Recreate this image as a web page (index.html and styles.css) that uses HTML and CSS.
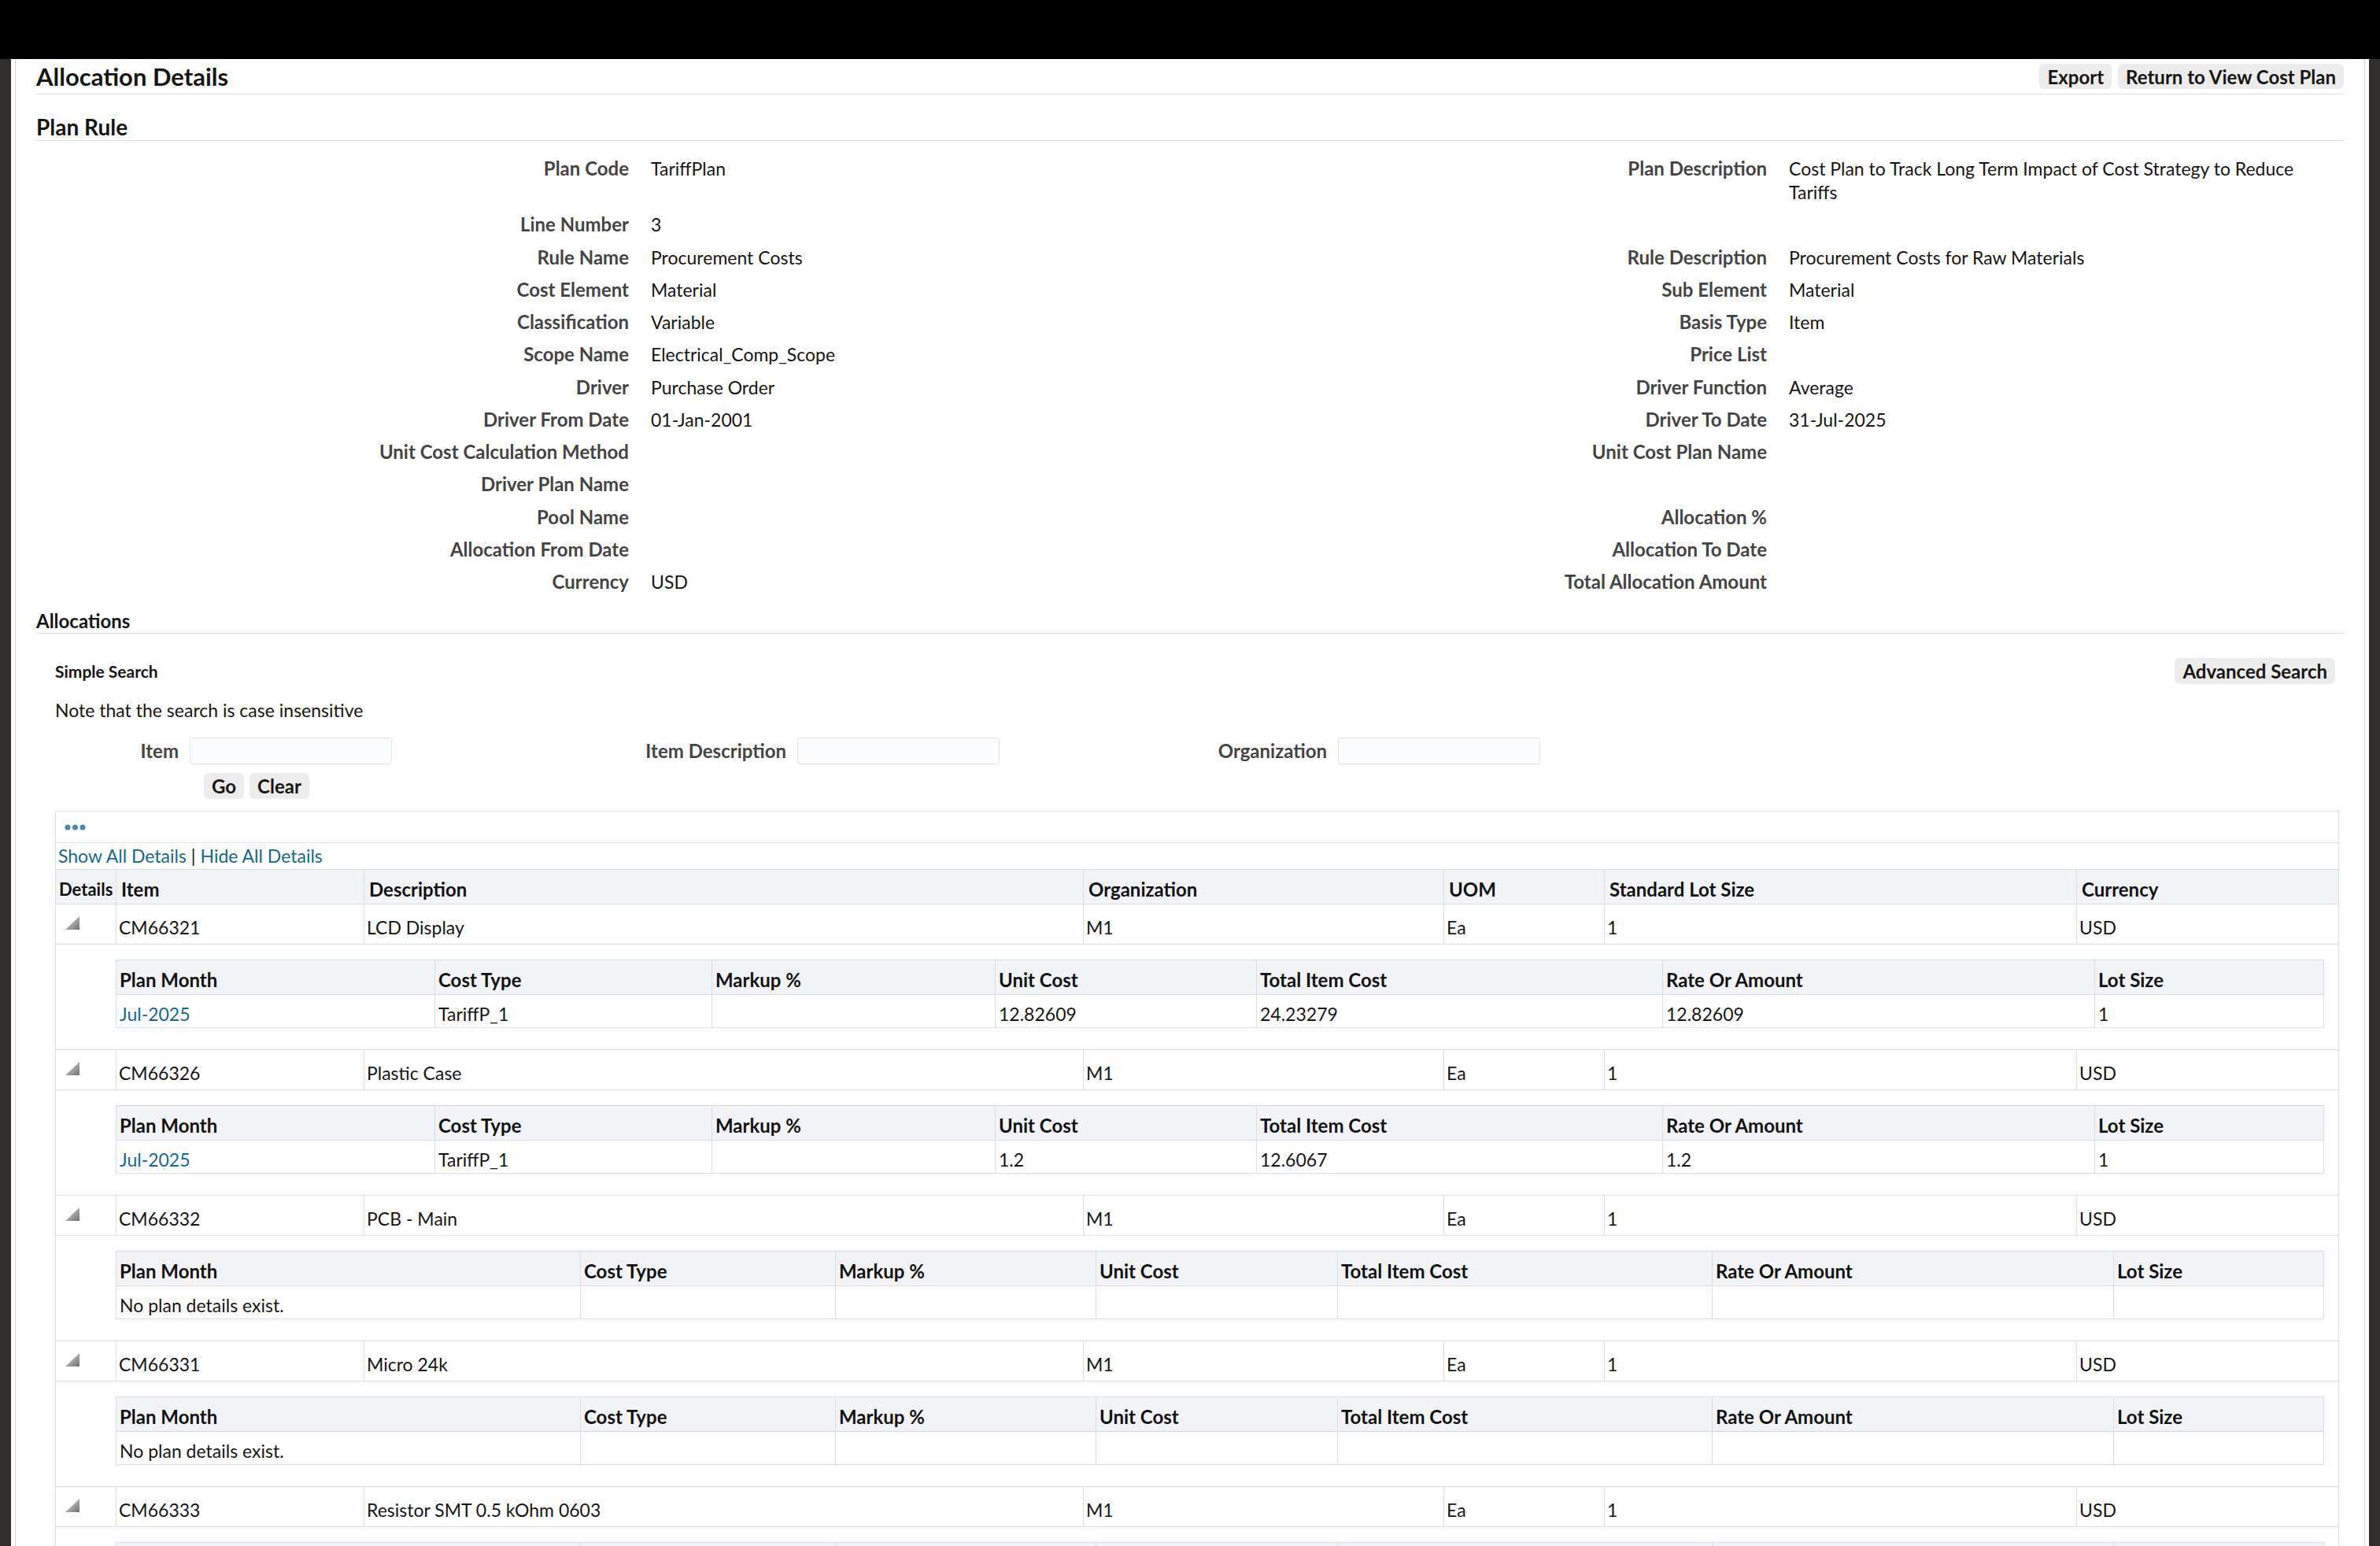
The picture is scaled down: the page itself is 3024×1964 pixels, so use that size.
FILE: index.html
```html
<!DOCTYPE html>
<html lang="en">
<head>
<meta charset="utf-8">
<title>Allocation Details</title>
<link rel="stylesheet" href="styles.css">
</head>
<body>
<div class="topbar"></div>
<div class="frame">
  <div class="side"></div>
  <div class="page">
    <div class="panel">
      <header class="page-head">
        <h1 class="page-title">Allocation Details</h1>
        <div class="actions">
          <button class="btn">Export</button>
          <button class="btn">Return to View Cost Plan</button>
        </div>
      </header>

      <h2 class="section section-rule">Plan Rule</h2>
      <div class="form-grid">
        <div class="lbl">Plan Code</div><div class="val">TariffPlan</div>
        <div class="lbl">Plan Description</div><div class="val">Cost Plan to Track Long Term Impact of Cost Strategy to Reduce Tariffs</div>

        <div class="lbl">Line Number</div><div class="val">3</div>
        <div class="lbl"></div><div class="val"></div>

        <div class="lbl">Rule Name</div><div class="val">Procurement Costs</div>
        <div class="lbl">Rule Description</div><div class="val">Procurement Costs for Raw Materials</div>

        <div class="lbl">Cost Element</div><div class="val">Material</div>
        <div class="lbl">Sub Element</div><div class="val">Material</div>

        <div class="lbl">Classification</div><div class="val">Variable</div>
        <div class="lbl">Basis Type</div><div class="val">Item</div>

        <div class="lbl">Scope Name</div><div class="val">Electrical_Comp_Scope</div>
        <div class="lbl">Price List</div><div class="val"></div>

        <div class="lbl">Driver</div><div class="val">Purchase Order</div>
        <div class="lbl">Driver Function</div><div class="val">Average</div>

        <div class="lbl">Driver From Date</div><div class="val">01-Jan-2001</div>
        <div class="lbl">Driver To Date</div><div class="val">31-Jul-2025</div>

        <div class="lbl">Unit Cost Calculation Method</div><div class="val"></div>
        <div class="lbl">Unit Cost Plan Name</div><div class="val"></div>

        <div class="lbl">Driver Plan Name</div><div class="val"></div>
        <div class="lbl"></div><div class="val"></div>

        <div class="lbl">Pool Name</div><div class="val"></div>
        <div class="lbl">Allocation %</div><div class="val"></div>

        <div class="lbl">Allocation From Date</div><div class="val"></div>
        <div class="lbl">Allocation To Date</div><div class="val"></div>

        <div class="lbl">Currency</div><div class="val">USD</div>
        <div class="lbl">Total Allocation Amount</div><div class="val"></div>
      </div>

      <h2 class="section section-alloc">Allocations</h2>
      <div class="search">
        <div class="search-head">
          <span class="search-title">Simple Search</span>
          <button class="btn btn-tall">Advanced Search</button>
        </div>
        <p class="note">Note that the search is case insensitive</p>
        <div class="fields">
          <label class="flbl">Item</label><input class="finput" type="text">
          <label class="flbl">Item Description</label><input class="finput" type="text">
          <label class="flbl">Organization</label><input class="finput" type="text">
          <div class="fbtns"><button class="btn btn-tall">Go</button><button class="btn btn-tall">Clear</button></div>
        </div>

        <div class="results">
          <div class="dots-row">
            <svg class="dots" width="27" height="8" viewBox="0 0 27 8"><circle cx="4" cy="4" r="3.5"/><circle cx="13.5" cy="4" r="3.5"/><circle cx="23" cy="4" r="3.5"/></svg>
          </div>
          <div class="links-row"><a class="link">Show All Details</a> | <a class="link">Hide All Details</a></div>

          <div class="trow thead main-cols">
            <div class="c c-details">Details</div><div class="c">Item</div><div class="c">Description</div><div class="c">Organization</div><div class="c">UOM</div><div class="c">Standard Lot Size</div><div class="c">Currency</div>
          </div>

          <div class="trow main-cols">
            <div class="c c-tri"><svg class="tri" width="18" height="17" viewBox="0 0 18 17"><use href="#tri"/></svg></div><div class="c">CM66321</div><div class="c">LCD Display</div><div class="c">M1</div><div class="c">Ea</div><div class="c">1</div><div class="c">USD</div>
          </div>
          <div class="detail">
            <div class="sub">
              <div class="srow shead cols-a"><div class="c">Plan Month</div><div class="c">Cost Type</div><div class="c">Markup %</div><div class="c">Unit Cost</div><div class="c">Total Item Cost</div><div class="c">Rate Or Amount</div><div class="c">Lot Size</div></div>
              <div class="srow cols-a"><div class="c"><a class="link">Jul-2025</a></div><div class="c">TariffP_1</div><div class="c"></div><div class="c">12.82609</div><div class="c">24.23279</div><div class="c">12.82609</div><div class="c">1</div></div>
            </div>
          </div>

          <div class="trow main-cols">
            <div class="c c-tri"><svg class="tri" width="18" height="17" viewBox="0 0 18 17"><use href="#tri"/></svg></div><div class="c">CM66326</div><div class="c">Plastic Case</div><div class="c">M1</div><div class="c">Ea</div><div class="c">1</div><div class="c">USD</div>
          </div>
          <div class="detail">
            <div class="sub">
              <div class="srow shead cols-a"><div class="c">Plan Month</div><div class="c">Cost Type</div><div class="c">Markup %</div><div class="c">Unit Cost</div><div class="c">Total Item Cost</div><div class="c">Rate Or Amount</div><div class="c">Lot Size</div></div>
              <div class="srow cols-a"><div class="c"><a class="link">Jul-2025</a></div><div class="c">TariffP_1</div><div class="c"></div><div class="c">1.2</div><div class="c">12.6067</div><div class="c">1.2</div><div class="c">1</div></div>
            </div>
          </div>

          <div class="trow main-cols">
            <div class="c c-tri"><svg class="tri" width="18" height="17" viewBox="0 0 18 17"><use href="#tri"/></svg></div><div class="c">CM66332</div><div class="c">PCB - Main</div><div class="c">M1</div><div class="c">Ea</div><div class="c">1</div><div class="c">USD</div>
          </div>
          <div class="detail">
            <div class="sub">
              <div class="srow shead cols-b"><div class="c">Plan Month</div><div class="c">Cost Type</div><div class="c">Markup %</div><div class="c">Unit Cost</div><div class="c">Total Item Cost</div><div class="c">Rate Or Amount</div><div class="c">Lot Size</div></div>
              <div class="srow cols-b"><div class="c">No plan details exist.</div><div class="c"></div><div class="c"></div><div class="c"></div><div class="c"></div><div class="c"></div><div class="c"></div></div>
            </div>
          </div>

          <div class="trow main-cols">
            <div class="c c-tri"><svg class="tri" width="18" height="17" viewBox="0 0 18 17"><use href="#tri"/></svg></div><div class="c">CM66331</div><div class="c">Micro 24k</div><div class="c">M1</div><div class="c">Ea</div><div class="c">1</div><div class="c">USD</div>
          </div>
          <div class="detail">
            <div class="sub">
              <div class="srow shead cols-b"><div class="c">Plan Month</div><div class="c">Cost Type</div><div class="c">Markup %</div><div class="c">Unit Cost</div><div class="c">Total Item Cost</div><div class="c">Rate Or Amount</div><div class="c">Lot Size</div></div>
              <div class="srow cols-b"><div class="c">No plan details exist.</div><div class="c"></div><div class="c"></div><div class="c"></div><div class="c"></div><div class="c"></div><div class="c"></div></div>
            </div>
          </div>

          <div class="trow main-cols">
            <div class="c c-tri"><svg class="tri" width="18" height="17" viewBox="0 0 18 17"><use href="#tri"/></svg></div><div class="c">CM66333</div><div class="c">Resistor SMT 0.5 kOhm 0603</div><div class="c">M1</div><div class="c">Ea</div><div class="c">1</div><div class="c">USD</div>
          </div>
          <div class="detail">
            <div class="sub">
              <div class="srow shead cols-b"><div class="c"></div><div class="c"></div><div class="c"></div><div class="c"></div><div class="c"></div><div class="c"></div><div class="c"></div></div>
            </div>
          </div>
        </div>
      </div>
    </div>
  </div>
  <div class="side"></div>
</div>

<svg class="defs" width="0" height="0" aria-hidden="true">
  <defs>
    <linearGradient id="triGrad" x1="0" y1="0" x2="1" y2="1">
      <stop offset="0" stop-color="#d4d4d4"/>
      <stop offset="0.55" stop-color="#a3a3a3"/>
      <stop offset="1" stop-color="#6f6f6f"/>
    </linearGradient>
    <symbol id="tri" viewBox="0 0 18 17">
      <polygon points="18,0 18,17 0,17" fill="url(#triGrad)"/>
    </symbol>
  </defs>
</svg>
</body>
</html>
```

FILE: styles.css
```css
html, body {
  margin: 0;
  padding: 0;
  overflow: hidden;
  background: #000;
}

body {
  width: 3024px;
  height: 1964px;
  font-family: Lato, "Noto Sans", "Liberation Sans", sans-serif;
  font-size: 23px;
  color: #161513;
}

.defs {
  position: absolute;
  width: 0;
  height: 0;
}

.topbar {
  height: 75px;
  background: #000;
}

.frame {
  display: flex;
  height: 1889px;
}

.side {
  flex: none;
  width: 14px;
  background: #332f2c;
}

.page {
  flex: 1;
  background: #fff;
  padding: 0 5px;
  overflow: hidden;
}

.panel {
  height: 100%;
  box-sizing: border-box;
  border-left: 1px solid #d4d4d4;
  border-right: 1px solid #d4d4d4;
  padding: 0 26px;
  overflow: hidden;
}

/* header */
.page-head {
  display: flex;
  justify-content: space-between;
  align-items: flex-start;
  height: 38px;
  padding-top: 6px;
  border-bottom: 1px solid #d6dde4;
}

.page-title {
  margin: 0;
  font-size: 31px;
  line-height: 32px;
  font-weight: 700;
  color: #161513;
}

.actions {
  display: flex;
  gap: 8px;
}

.btn {
  display: inline-flex;
  align-items: center;
  height: 32px;
  padding: 0 10px;
  border: none;
  border-radius: 6px;
  background: #ececec;
  font-family: inherit;
  font-size: 24px;
  font-weight: 700;
  color: #161513;
}

.btn-tall {
  height: 33px;
}

/* sections */
.section {
  margin: 0;
  font-weight: 700;
  color: #161513;
  border-bottom: 1px solid #d6dde4;
}

.section-rule {
  margin-top: 26px;
  padding-bottom: 2px;
  font-size: 28px;
  line-height: 30px;
}

.section-alloc {
  margin-top: 20px;
  padding-bottom: 0;
  font-size: 24px;
  line-height: 30px;
}

/* form */
.form-grid {
  display: grid;
  grid-template-columns: 753px 645px 745px 705px;
  column-gap: 28px;
  row-gap: 11.25px;
  margin-top: 20px;
  line-height: 30px;
}

.lbl {
  text-align: right;
  font-size: 24px;
  font-weight: 700;
  color: #444;
}

.val {
  color: #161513;
}

/* search */
.search {
  padding: 0 11px 0 24px;
}

.search-head {
  display: flex;
  justify-content: space-between;
  align-items: center;
  margin-top: 31px;
}

.search-title {
  font-size: 21px;
  font-weight: 700;
  color: #161513;
}

.note {
  margin: 18px 0 0;
  line-height: 30px;
}

.fields {
  display: grid;
  grid-template-columns: 157px 257px 487px 257px 402px 257px;
  column-gap: 14px;
  row-gap: 11px;
  margin-top: 20px;
  align-items: center;
}

.flbl {
  text-align: right;
  font-size: 24px;
  font-weight: 700;
  color: #444;
  line-height: 34px;
}

.finput {
  height: 34px;
  box-sizing: border-box;
  border: 1px solid #e0e3e7;
  border-radius: 3px;
  background: #fbfcfd;
  margin: 0;
  width: 257px;
}

.fbtns {
  grid-column: 2 / 3;
  display: flex;
  gap: 7px;
  padding-left: 18px;
}

/* results */
.results {
  width: 2902px;
  box-sizing: border-box;
  margin-top: 15px;
  border-top: 1px solid #d6dde4;
  border-left: 1px solid #d6dde4;
}

.dots-row {
  height: 40px;
  box-sizing: border-box;
  display: flex;
  align-items: center;
  padding-left: 11px;
  border-right: 1px solid #d6dde4;
  border-bottom: 1px solid #d6dde4;
}

.dots {
  fill: #4f87ad;
}

.links-row {
  height: 33px;
  line-height: 33px;
  padding-left: 3px;
  border-right: 1px solid #d6dde4;
}

.link {
  color: #14698f;
  text-decoration: none;
}

.main-cols {
  display: grid;
  grid-template-columns: 77px 315px 914px 458px 204px 600px 333px;
}

.trow {
  height: 51px;
  box-sizing: border-box;
  border-bottom: 1px solid #d6dde4;
}

.thead {
  height: 45px;
  border-top: 1px solid #d6dde4;
  background: #f1f3f7;
}

.c {
  display: flex;
  align-items: center;
  box-sizing: border-box;
  padding-left: 3px;
  padding-top: 7px;
  border-right: 1px solid #d6dde4;
  line-height: 30px;
  white-space: nowrap;
  overflow: hidden;
}

.thead .c,
.shead .c {
  padding-left: 6px;
  font-size: 24px;
  font-weight: 700;
  color: #111;
}

.thead .c-details {
  padding-left: 4px;
  font-size: 22px;
}

.c-tri {
  padding-left: 12px;
  padding-top: 0;
  padding-bottom: 4px;
}

.tri {
  display: block;
}

.detail {
  height: 134px;
  box-sizing: border-box;
  padding: 19px 18px 0 76px;
  border-right: 1px solid #d6dde4;
  border-bottom: 1px solid #d6dde4;
}

.sub {
  border-left: 1px solid #d6dde4;
}

.srow {
  height: 42px;
  box-sizing: border-box;
  border-bottom: 1px solid #d6dde4;
}

.srow .c {
  padding-left: 4px;
}

.shead {
  height: 45px;
  border-top: 1px solid #d6dde4;
  background: #f1f3f7;
}

.cols-a {
  display: grid;
  grid-template-columns: 405px 352px 360px 332px 516px 549px 291px;
}

.cols-b {
  display: grid;
  grid-template-columns: 590px 324px 331px 307px 476px 510px 267px;
}
```
